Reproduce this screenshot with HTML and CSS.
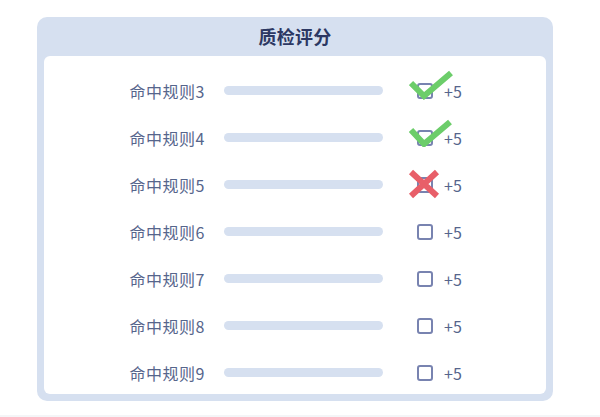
FILE: index.html
```html
<!DOCTYPE html>
<html lang="zh">
<head>
<meta charset="utf-8">
<link rel="stylesheet" href="styles.css">
</head>
<body>
<div class="card">
  <div class="title">质检评分</div>
  <div class="panel">
    <div class="row">
      <div class="label">命中规则3</div>
      <div class="bar"></div>
      <div class="box">
        <svg class="mark check" viewBox="0 0 44 30" width="44" height="30"><polyline points="2,13 15,26 42,3" fill="none" stroke="#6ccd6a" stroke-width="6" stroke-linejoin="miter"/></svg>
      </div>
      <div class="score">+5</div>
    </div>
    <div class="row">
      <div class="label">命中规则4</div>
      <div class="bar"></div>
      <div class="box">
        <svg class="mark check" viewBox="0 0 44 30" width="44" height="30"><polyline points="2,13 15,27 41,5" fill="none" stroke="#6ccd6a" stroke-width="6" stroke-linejoin="miter"/></svg>
      </div>
      <div class="score">+5</div>
    </div>
    <div class="row">
      <div class="label">命中规则5</div>
      <div class="bar"></div>
      <div class="box">
        <svg class="mark cross" viewBox="0 0 32 30" width="32" height="30"><path d="M3 3 L29 27 M29 3 L3 27" fill="none" stroke="#e85f69" stroke-width="6"/></svg>
      </div>
      <div class="score">+5</div>
    </div>
    <div class="row">
      <div class="label">命中规则6</div>
      <div class="bar"></div>
      <div class="box"></div>
      <div class="score">+5</div>
    </div>
    <div class="row">
      <div class="label">命中规则7</div>
      <div class="bar"></div>
      <div class="box"></div>
      <div class="score">+5</div>
    </div>
    <div class="row">
      <div class="label">命中规则8</div>
      <div class="bar"></div>
      <div class="box"></div>
      <div class="score">+5</div>
    </div>
    <div class="row">
      <div class="label">命中规则9</div>
      <div class="bar"></div>
      <div class="box"></div>
      <div class="score">+5</div>
    </div>
  </div>
</div>
<div class="footer"></div>
</body>
</html>
```
FILE: styles.css
```css
html, body {
  margin: 0;
  padding: 0;
  background: #ffffff;
  font-family: "Noto Sans CJK SC", "Noto Sans", sans-serif;
}
body {
  width: 600px;
  height: 417px;
  overflow: hidden;
  position: relative;
}
.card {
  margin: 17px 0 0 37px;
  width: 516px;
  height: 384px;
  box-sizing: border-box;
  background: #d6e0f0;
  border-radius: 10px;
  padding: 0 7px 7px;
  display: flex;
  flex-direction: column;
}
.title {
  height: 39px;
  line-height: 39px;
  text-align: center;
  font-size: 18px;
  font-weight: bold;
  color: #2c3863;
  letter-spacing: 0.3px;
}
.panel {
  flex: 1;
  background: #ffffff;
  border-radius: 6px;
  overflow: hidden;
  padding-top: 11px;
}
.row {
  height: 47px;
  display: flex;
  align-items: center;
}
.label {
  width: 161px;
  text-align: right;
  font-size: 16px;
  color: #56658c;
  letter-spacing: 0.5px;
}
.bar {
  margin-left: 19px;
  width: 159px;
  height: 9px;
  border-radius: 5px;
  background: #d6e0f0;
}
.box {
  position: relative;
  margin-left: 34px;
  width: 16px;
  height: 16px;
  box-sizing: border-box;
  border: 2px solid #7883b0;
  border-radius: 3px;
}
.mark {
  position: absolute;
  display: block;
}
.check {
  left: -10px;
  top: -15px;
}
.cross {
  left: -11px;
  top: -10px;
}
.score {
  margin-left: 11px;
  font-size: 16px;
  color: #56658c;
}
.footer {
  position: absolute;
  left: 0;
  right: 0;
  bottom: 0;
  height: 2px;
  background: #f4f5f7;
}
```
